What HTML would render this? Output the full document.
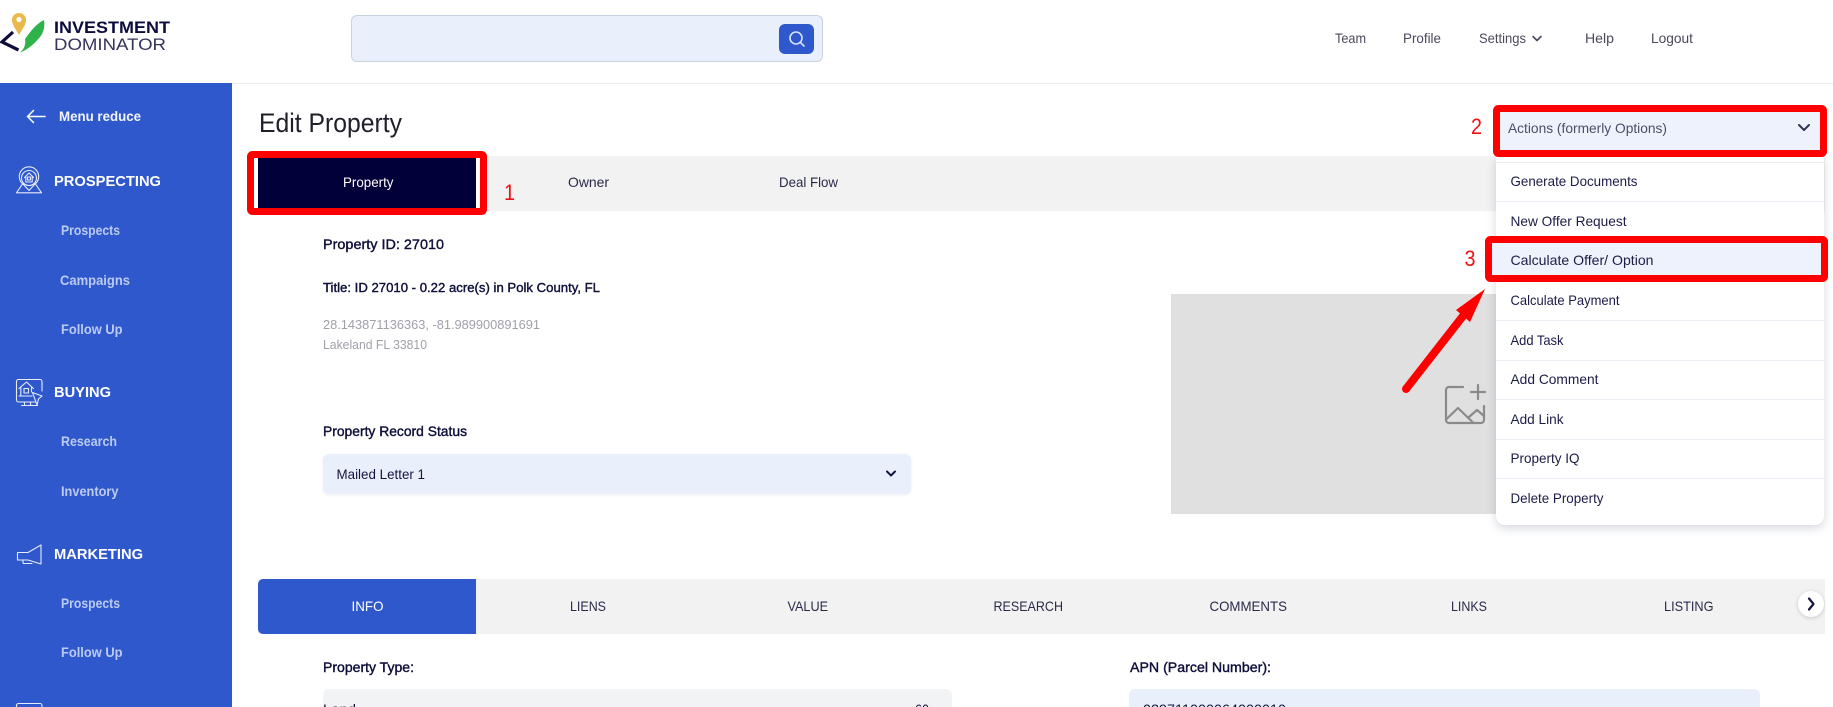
<!DOCTYPE html>
<html lang="en">
<head>
<meta charset="utf-8">
<title>Edit Property</title>
<style>
html,body{margin:0;padding:0;background:#fff;width:1833px;height:707px;overflow:hidden;}
#page{position:absolute;left:0;top:0;width:1833px;height:707px;overflow:hidden;font-family:"Liberation Sans",sans-serif;}
.b{position:absolute;box-sizing:border-box;}
svg{position:absolute;left:0;top:0;}
text{font-family:"Liberation Sans",sans-serif;}
.nav{font-size:14px;fill:#4a4a5c;}
.menu{font-size:14px;fill:#1c1c48;}
.dark{font-size:14px;fill:#15153f;}
.med{font-size:14px;fill:#0f0f3a;stroke:#0f0f3a;stroke-width:.4px;}
.grey{font-size:13px;fill:#a0a0aa;}
.tab{font-size:14px;fill:#2a2a4a;}
.head{font-size:15px;font-weight:700;fill:#fff;}
.sub{font-size:14px;font-weight:700;fill:#bccbf2;}
.red{font-size:22px;fill:#f01010;}
.ic{fill:none;stroke:#e6ecfb;stroke-width:1.1;stroke-linejoin:round;stroke-linecap:round;}
</style>
</head>
<body>
<div id="page">
<!-- header -->
<div class="b" style="left:232px;top:83px;width:1601px;height:1px;background:#ececec"></div>
<div class="b" style="left:351px;top:15px;width:472px;height:47px;background:#e9f0fb;border:1px solid #c9d2e3;border-radius:6px"></div>
<div class="b" style="left:779px;top:24px;width:35px;height:30px;background:#2f58cd;border-radius:6px"></div>
<!-- sidebar -->
<div class="b" style="left:0;top:83px;width:232px;height:624px;background:#2f58cd"></div>
<!-- tabs 1 -->
<div class="b" style="left:258px;top:156px;width:1567px;height:55px;background:#f2f2f2"></div>
<div class="b" style="left:254px;top:156px;width:226px;height:55px;background:#fff"></div>
<div class="b" style="left:258px;top:156px;width:218px;height:55px;background:#020038"></div>
<!-- property image -->
<div class="b" style="left:1171px;top:294px;width:330px;height:220px;background:#e0e0e0"></div>
<!-- status select -->
<div class="b" style="left:323px;top:454px;width:588px;height:40px;background:#e9f0fb;border-radius:6px;box-shadow:0 1px 3px rgba(40,60,120,.08)"></div>
<!-- tabs 2 -->
<div class="b" style="left:258px;top:579px;width:1567px;height:55px;background:#f2f2f2"></div>
<div class="b" style="left:258px;top:579px;width:218px;height:55px;background:#2f58cd;border-radius:5px 0 0 5px"></div>
<div class="b" style="left:1798px;top:591px;width:26px;height:26px;background:#fff;border-radius:50%;box-shadow:0 1px 4px rgba(0,0,0,.18)"></div>
<!-- inputs -->
<div class="b" style="left:323px;top:689px;width:629px;height:40px;background:#f2f3f5;border-radius:6px"></div>
<div class="b" style="left:1129px;top:689px;width:631px;height:40px;background:#e9f0fb;border-radius:6px"></div>
<!-- actions -->
<div class="b" style="left:1496px;top:108px;width:328px;height:46px;background:#eef2fc"></div>
<div class="b" style="left:1496px;top:157px;width:328px;height:368px;background:#fff;border-radius:0 0 9px 9px;box-shadow:0 3px 10px rgba(40,50,80,.2)"></div>
<div class="b" style="left:1496px;top:162px;width:328px;height:1px;background:#e9edf4"></div>
<div class="b" style="left:1496px;top:201px;width:328px;height:1px;background:#e9edf4"></div>
<div class="b" style="left:1496px;top:241px;width:328px;height:1px;background:#e9edf4"></div>
<div class="b" style="left:1496px;top:281px;width:328px;height:1px;background:#e9edf4"></div>
<div class="b" style="left:1496px;top:320px;width:328px;height:1px;background:#e9edf4"></div>
<div class="b" style="left:1496px;top:360px;width:328px;height:1px;background:#e9edf4"></div>
<div class="b" style="left:1496px;top:399px;width:328px;height:1px;background:#e9edf4"></div>
<div class="b" style="left:1496px;top:439px;width:328px;height:1px;background:#e9edf4"></div>
<div class="b" style="left:1496px;top:478px;width:328px;height:1px;background:#e9edf4"></div>
<div class="b" style="left:1492px;top:243px;width:329px;height:32px;background:#eef2fc"></div>

<svg width="1833" height="707" viewBox="0 0 1833 707" xmlns="http://www.w3.org/2000/svg">
<!-- logo -->
<path d="M19 35C15 28 12 24.500 12 20A7 7 0 0 1 26 20C26 24.500 23 28 19 35Z" fill="#e9b949"/>
<circle cx="19" cy="19.500" r="2.600" fill="#fff"/>
<path d="M44 20C45 26 44 32 40 37C35 43 29 49 20 52.500C24 49 26 45 25 39C30 32 36 24 44 20Z" fill="#2fb24a"/>
<path d="M13 32L2 42L18.500 50" fill="none" stroke="#0d0c3c" stroke-width="3.200"/>
<text x="54" y="33" textLength="116" lengthAdjust="spacingAndGlyphs" style="font-size:16.500px;font-weight:700;fill:#0d0c3c">INVESTMENT</text>
<text x="54" y="50" textLength="112" lengthAdjust="spacingAndGlyphs" style="font-size:16.500px;fill:#35355a">DOMINATOR</text>

<!-- search icon -->
<circle cx="796" cy="38" r="6" fill="none" stroke="#d8e3fa" stroke-width="1.600"/>
<path d="M800.500 42.500L804 46" stroke="#d8e3fa" stroke-width="1.600" stroke-linecap="round"/>

<!-- nav -->
<text class="nav" x="1335" y="43" textLength="31" lengthAdjust="spacingAndGlyphs">Team</text>
<text class="nav" x="1403" y="43" textLength="38" lengthAdjust="spacingAndGlyphs">Profile</text>
<text class="nav" x="1479" y="43" textLength="47" lengthAdjust="spacingAndGlyphs">Settings</text>
<path d="M1533 36.500L1537 40.500L1541 36.500" fill="none" stroke="#4a4a5c" stroke-width="1.600" stroke-linecap="round" stroke-linejoin="round"/>
<text class="nav" x="1585" y="43" textLength="29" lengthAdjust="spacingAndGlyphs">Help</text>
<text class="nav" x="1651" y="43" textLength="42" lengthAdjust="spacingAndGlyphs">Logout</text>

<!-- sidebar -->
<path d="M27.500 116.500H45M33.500 110.500L27.500 116.500L33.500 122.500" fill="none" stroke="#fff" stroke-width="1.500" stroke-linecap="round" stroke-linejoin="round"/>
<text x="59" y="121" textLength="82" lengthAdjust="spacingAndGlyphs" style="font-size:14px;font-weight:700;fill:#f4f6fd">Menu reduce</text>

<g class="ic">
<path d="M29 190.500L23.500 184.500A9.700 9.700 0 1 1 34.500 184.500Z"/>
<circle cx="29" cy="178" r="7.500"/>
<path d="M24.500 177.500L29 173L33.500 177.500M25.800 176.500V182H32.200V176.500"/>
<rect x="27.500" y="177" width="3" height="3"/>
<path d="M22.500 184L16.500 192.800H41.500L35.500 184"/>
</g>
<text class="head" x="54" y="186" textLength="107" lengthAdjust="spacingAndGlyphs">PROSPECTING</text>
<text class="sub" x="61" y="235" textLength="59" lengthAdjust="spacingAndGlyphs">Prospects</text>
<text class="sub" x="60" y="285" textLength="70" lengthAdjust="spacingAndGlyphs">Campaigns</text>
<text class="sub" x="61" y="334" textLength="61.500" lengthAdjust="spacingAndGlyphs">Follow Up</text>

<g class="ic">
<path d="M36 402H18.500A2 2 0 0 1 16.500 400V381.500A2 2 0 0 1 18.500 379.500H40A2 2 0 0 1 42 381.500V391"/>
<path d="M24.500 402V405M30.500 402V405M21.500 405.500H37.500"/>
<path d="M19 388.500L26.500 382L33.500 388.500M20.800 387.500V395.500M31.500 387.500V392M19 396H32"/>
<rect x="24" y="388.500" width="4.500" height="4.500"/>
<path d="M32.500 392.500L42 396L38.500 399L37 405Z" fill="#2f58cd"/>
</g>
<text class="head" x="54" y="397" textLength="57" lengthAdjust="spacingAndGlyphs">BUYING</text>
<text class="sub" x="61" y="446" textLength="56" lengthAdjust="spacingAndGlyphs">Research</text>
<text class="sub" x="61" y="496" textLength="57.500" lengthAdjust="spacingAndGlyphs">Inventory</text>

<g class="ic">
<path d="M17.500 552.500H28L41 545V564L28 560H17.500Z"/>
<path d="M23 560V562.500A1 1 0 0 0 24 563.500H32"/>
</g>
<text class="head" x="54" y="559" textLength="89" lengthAdjust="spacingAndGlyphs">MARKETING</text>
<text class="sub" x="61" y="608" textLength="59" lengthAdjust="spacingAndGlyphs">Prospects</text>
<text class="sub" x="61" y="657" textLength="61.500" lengthAdjust="spacingAndGlyphs">Follow Up</text>
<path d="M16.500 712V705.500A2 2 0 0 1 18.500 703.500H40A2 2 0 0 1 42 705.500V712" fill="none" stroke="#e6ecfb" stroke-width="1.100"/>

<!-- title -->
<text x="259" y="132" textLength="143" lengthAdjust="spacingAndGlyphs" style="font-size:27px;fill:#20202a">Edit Property</text>

<!-- tabs 1 -->
<text x="343" y="187" textLength="50.500" lengthAdjust="spacingAndGlyphs" style="font-size:14px;fill:#fff">Property</text>
<text class="tab" x="568" y="187" textLength="41" lengthAdjust="spacingAndGlyphs">Owner</text>
<text class="tab" x="779" y="187" textLength="59" lengthAdjust="spacingAndGlyphs">Deal Flow</text>

<!-- property info -->
<text class="med" x="323" y="249" textLength="121" lengthAdjust="spacingAndGlyphs">Property ID: 27010</text>
<text class="med" x="323" y="292" textLength="277" lengthAdjust="spacingAndGlyphs" style="font-size:13px">Title: ID 27010 - 0.22 acre(s) in Polk County, FL</text>
<text class="grey" x="323" y="329" textLength="217" lengthAdjust="spacingAndGlyphs">28.143871136363, -81.989900891691</text>
<text class="grey" x="323" y="349" textLength="104" lengthAdjust="spacingAndGlyphs">Lakeland FL 33810</text>

<text class="med" x="323" y="436" textLength="144" lengthAdjust="spacingAndGlyphs">Property Record Status</text>
<text class="dark" x="336.500" y="479" textLength="88.500" lengthAdjust="spacingAndGlyphs">Mailed Letter 1</text>
<path d="M887 471.500L891 475.500L895 471.500" fill="none" stroke="#15153f" stroke-width="2" stroke-linecap="round" stroke-linejoin="round"/>

<!-- image placeholder icon -->
<g fill="none" stroke="#8a8a8a" stroke-width="2.200" stroke-linecap="round" stroke-linejoin="round">
<path d="M1463 387H1449A3 3 0 0 0 1446 390V420A3 3 0 0 0 1449 423H1481A3 3 0 0 0 1484 420V406"/>
<path d="M1478 385V399M1471 392H1485"/>
<path d="M1446.500 419L1458 408L1473 422.500M1469 417L1477 410L1484 416"/>
</g>

<!-- tabs 2 -->
<text x="351.500" y="611" textLength="32" lengthAdjust="spacingAndGlyphs" style="font-size:14px;fill:#fff">INFO</text>
<text class="tab" x="570" y="611" textLength="36" lengthAdjust="spacingAndGlyphs">LIENS</text>
<text class="tab" x="787.500" y="611" textLength="40.500" lengthAdjust="spacingAndGlyphs">VALUE</text>
<text class="tab" x="993.500" y="611" textLength="69.500" lengthAdjust="spacingAndGlyphs">RESEARCH</text>
<text class="tab" x="1209.500" y="611" textLength="77.500" lengthAdjust="spacingAndGlyphs">COMMENTS</text>
<text class="tab" x="1451" y="611" textLength="36" lengthAdjust="spacingAndGlyphs">LINKS</text>
<text class="tab" x="1664" y="611" textLength="49.500" lengthAdjust="spacingAndGlyphs">LISTING</text>
<path d="M1809 598.500L1813.500 604L1809 609.500" fill="none" stroke="#15153f" stroke-width="2.200" stroke-linecap="round" stroke-linejoin="round"/>

<!-- fields -->
<text class="med" x="323" y="672" textLength="91" lengthAdjust="spacingAndGlyphs">Property Type:</text>
<text class="med" x="1130" y="672" textLength="141" lengthAdjust="spacingAndGlyphs">APN (Parcel Number):</text>
<text class="dark" x="323" y="714" textLength="33" lengthAdjust="spacingAndGlyphs">Land</text>
<text class="dark" x="915" y="714" textLength="14" lengthAdjust="spacingAndGlyphs">60</text>
<text class="dark" x="1143" y="714" textLength="143" lengthAdjust="spacingAndGlyphs">029711000064000010</text>

<!-- actions -->
<text x="1508" y="133" textLength="159" lengthAdjust="spacingAndGlyphs" style="font-size:14px;fill:#4a4f68">Actions (formerly Options)</text>
<path d="M1799 125L1804 130L1809 125" fill="none" stroke="#2a3350" stroke-width="2" stroke-linecap="round" stroke-linejoin="round"/>
<text class="menu" x="1510.500" y="186" textLength="127" lengthAdjust="spacingAndGlyphs">Generate Documents</text>
<text class="menu" x="1510.500" y="226" textLength="116" lengthAdjust="spacingAndGlyphs">New Offer Request</text>
<text class="menu" x="1510.500" y="265" textLength="143" lengthAdjust="spacingAndGlyphs">Calculate Offer/ Option</text>
<text class="menu" x="1510.500" y="305" textLength="109" lengthAdjust="spacingAndGlyphs">Calculate Payment</text>
<text class="menu" x="1510.500" y="345" textLength="53" lengthAdjust="spacingAndGlyphs">Add Task</text>
<text class="menu" x="1510.500" y="384" textLength="88" lengthAdjust="spacingAndGlyphs">Add Comment</text>
<text class="menu" x="1510.500" y="424" textLength="53" lengthAdjust="spacingAndGlyphs">Add Link</text>
<text class="menu" x="1510.500" y="463" textLength="69" lengthAdjust="spacingAndGlyphs">Property IQ</text>
<text class="menu" x="1510.500" y="503" textLength="93" lengthAdjust="spacingAndGlyphs">Delete Property</text>

<!-- annotations -->
<g fill="none" stroke="#fe0000" stroke-width="7" stroke-linejoin="round">
<rect x="250.500" y="154.500" width="233" height="57" rx="2"/>
<rect x="1496.500" y="108.500" width="327" height="45" rx="2"/>
<rect x="1488.500" y="239.500" width="336" height="39" rx="2"/>
</g>
<path d="M1406 389L1463 316" stroke="#fe0000" stroke-width="8" stroke-linecap="round"/>
<path d="M1485 289L1456 310L1470 322Z" fill="#fe0000"/>
<text class="red" x="504" y="200" textLength="11" lengthAdjust="spacingAndGlyphs">1</text>
<text class="red" x="1471" y="134" textLength="11" lengthAdjust="spacingAndGlyphs">2</text>
<text class="red" x="1464.500" y="266" textLength="11" lengthAdjust="spacingAndGlyphs">3</text>
</svg>
</div>
</body>
</html>
